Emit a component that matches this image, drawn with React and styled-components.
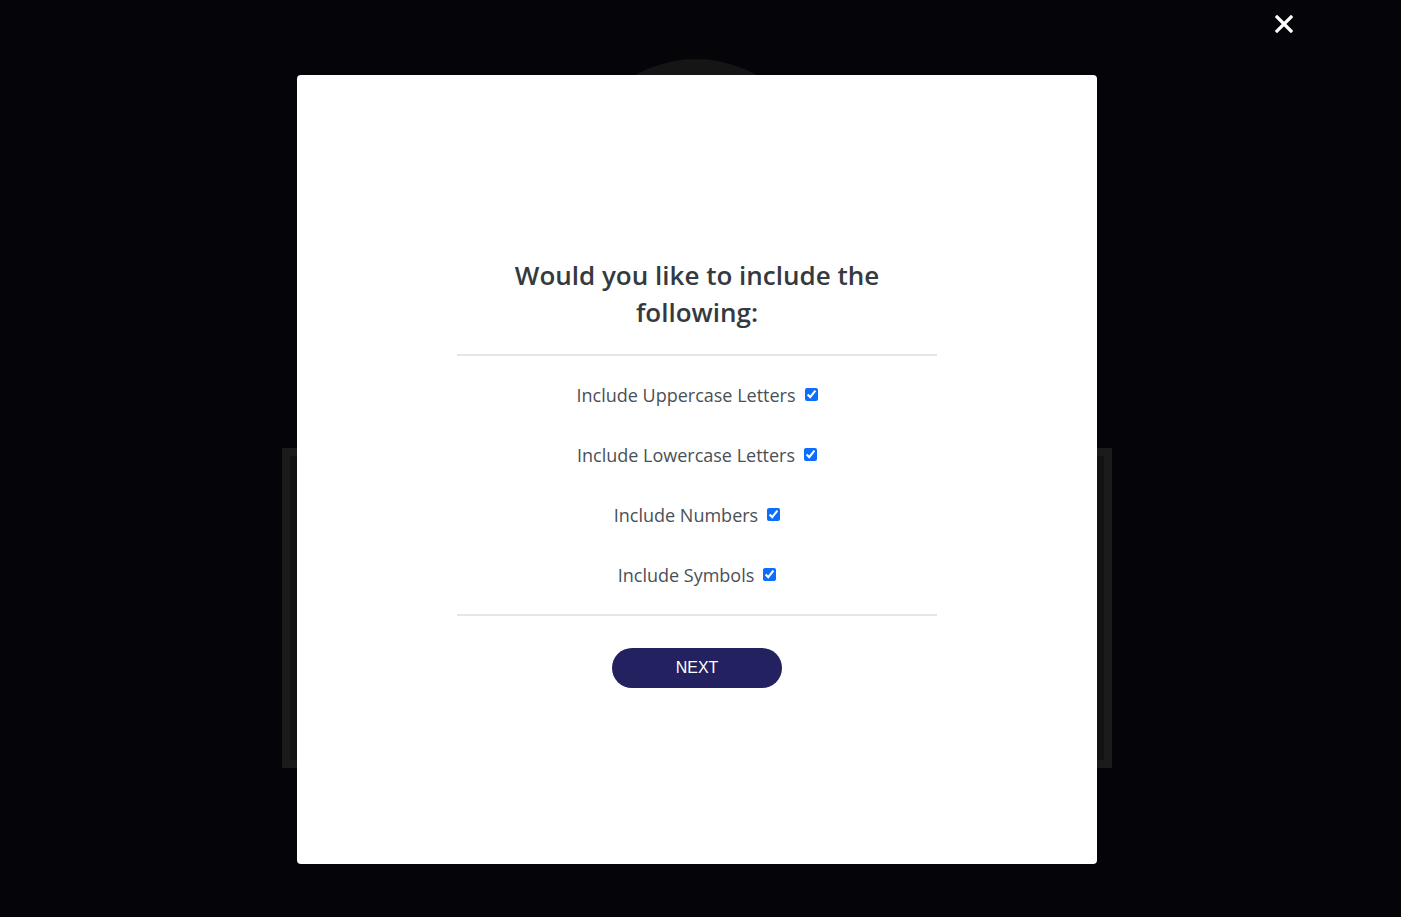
import React, { useState } from "react";
import styled, { createGlobalStyle } from "styled-components";

const GlobalStyle = createGlobalStyle`
  html, body {
    margin: 0;
    padding: 0;
    background: #050409;
  }
  body {
    font-family: "Open Sans", "Liberation Sans", sans-serif;
  }
`;

const options = [
  { id: "upper", label: "Include Uppercase Letters" },
  { id: "lower", label: "Include Lowercase Letters" },
  { id: "numbers", label: "Include Numbers" },
  { id: "symbols", label: "Include Symbols" },
];

const App = () => {
  const [checked, setChecked] = useState({
    upper: true,
    lower: true,
    numbers: true,
    symbols: true,
  });

  return (
    <>
      <GlobalStyle />
      <Page>
        <Backdrop>
          <Circle />
          <Panel />
        </Backdrop>
        <Overlay>
          <CloseButton aria-label="Close">
            <svg width="18" height="18" viewBox="0 0 18 18">
              <path
                d="M2 2 L16 16 M16 2 L2 16"
                stroke="#fff"
                strokeWidth="3.2"
                strokeLinecap="square"
              />
            </svg>
          </CloseButton>
          <Modal>
            <Title>Would you like to include the following:</Title>
            <Rule />
            <OptionList>
              {options.map((opt) => (
                <OptionRow key={opt.id}>
                  <OptionLabel htmlFor={opt.id}>{opt.label}</OptionLabel>
                  <Checkbox
                    id={opt.id}
                    type="checkbox"
                    checked={checked[opt.id]}
                    onChange={() =>
                      setChecked({ ...checked, [opt.id]: !checked[opt.id] })
                    }
                  />
                </OptionRow>
              ))}
            </OptionList>
            <Rule />
            <NextButton>NEXT</NextButton>
          </Modal>
        </Overlay>
      </Page>
    </>
  );
};

export default App;

const Page = styled.div`
  position: relative;
  width: 1401px;
  height: 917px;
  overflow: hidden;
  background: #050409;
`;

const Backdrop = styled.div`
  display: flex;
  flex-direction: column;
  align-items: center;
  padding-top: 59px;
`;

const Circle = styled.div`
  width: 248px;
  height: 248px;
  border-radius: 50%;
  background: #151515;
  margin-left: -9px;
`;

const Panel = styled.div`
  margin-top: 141px;
  width: 814px;
  height: 304px;
  background: #121212;
  border: 8px solid #1b1b1b;
  margin-left: -8px;
`;

const Overlay = styled.div`
  position: absolute;
  inset: 0;
  display: flex;
  justify-content: center;
  padding: 75px 7px 0 0;
`;

const CloseButton = styled.button`
  position: absolute;
  top: 15px;
  right: 108px;
  background: none;
  border: none;
  padding: 0;
  cursor: pointer;
  display: flex;
`;

const Modal = styled.div`
  width: 800px;
  height: 789px;
  background: #fff;
  border-radius: 4px;
  display: flex;
  flex-direction: column;
  align-items: center;
  padding-top: 182px;
  box-sizing: border-box;
`;

const Title = styled.h2`
  margin: 0;
  width: 400px;
  text-align: center;
  font-family: "Open Sans", sans-serif;
  font-weight: 600;
  font-size: 26px;
  line-height: 37px;
  color: #343a40;
`;

const Rule = styled.hr`
  width: 480px;
  height: 2px;
  margin: 23px 0 0;
  border: none;
  background: #e6e6e6;
`;

const OptionList = styled.div`
  display: flex;
  flex-direction: column;
  align-items: center;
  gap: 35px;
  padding: 26px 0 4px;
`;

const OptionRow = styled.div`
  display: flex;
  align-items: center;
  gap: 9px;
  height: 25px;
`;

const OptionLabel = styled.label`
  font-family: "Open Sans", sans-serif;
  font-size: 18px;
  color: #495057;
`;

const Checkbox = styled.input`
  width: 13px;
  height: 13px;
  margin: 0;
  accent-color: #0d6efd;
`;

const NextButton = styled.button`
  margin-top: 32px;
  width: 170px;
  height: 40px;
  border: none;
  border-radius: 20px;
  background: #23215f;
  color: #fff;
  font-family: "Liberation Sans", Arial, sans-serif;
  font-size: 16px;
  cursor: pointer;
`;
